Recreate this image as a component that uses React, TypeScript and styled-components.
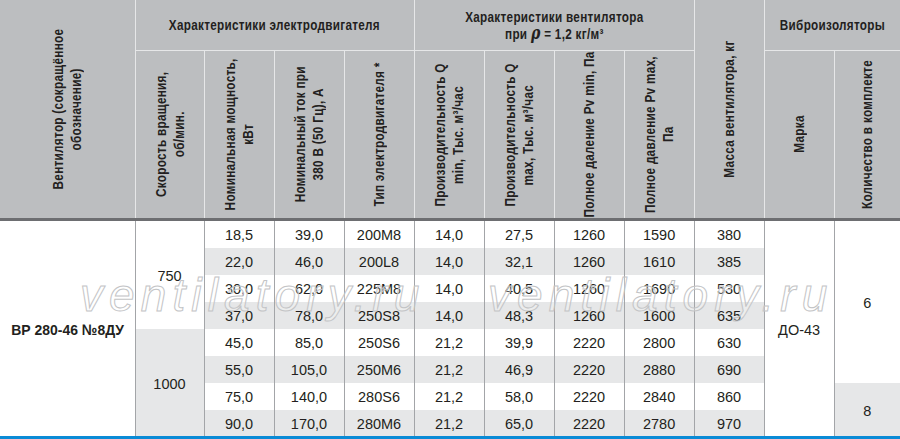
import styled, { createGlobalStyle } from "styled-components";

const GlobalStyle = createGlobalStyle`
  html, body {
    margin: 0;
    padding: 0;
    background: #fff;
  }
`;

const SANS = `"Liberation Sans", Arial, sans-serif`;

const Page = styled.div`
  width: 900px;
  height: 439px;
  display: flex;
  flex-direction: column;
  overflow: hidden;
  background: #fff;
`;

const TableBox = styled.div`
  position: relative;
  flex: 1;
  overflow: hidden;
`;

const BlueBar = styled.div`
  flex: none;
  height: 3px;
  background: #0a8bd6;
`;

const Table = styled.table`
  width: 900px;
  table-layout: fixed;
  border-collapse: collapse;
  border-style: hidden;
  color: #231f20;
  font-family: ${SANS};
`;

const HeadCell = styled.th`
  background: #bcbec0;
  border: 1px solid #e6e7e8;
  border-bottom: 3px solid #6d6e71;
  padding: 0;
  font-weight: 700;
  font-size: 15px;
  line-height: 18px;
  letter-spacing: 0.4px;
  text-align: center;
  vertical-align: middle;
  overflow: hidden;
`;

const GroupCell = styled.th`
  background: #bcbec0;
  border: 1px solid #e6e7e8;
  height: 50px;
  padding: 0;
  font-weight: 700;
  font-size: 15px;
  line-height: 16px;
  letter-spacing: 0.4px;
  text-align: center;
  vertical-align: middle;
`;

// the print uses a condensed face: squeeze along the text direction
const Squeeze = styled.span`
  display: inline-block;
  white-space: nowrap;
  transform: scaleX(0.78);
`;

const SubRow = styled.tr`
  height: 169px;
`;

const VBox = styled.div<{ $h: number }>`
  height: ${(p) => p.$h}px;
  display: flex;
  align-items: center;
  justify-content: center;
`;

const VLabel = styled.span`
  flex: none;
  writing-mode: vertical-rl;
  transform: rotate(180deg) scaleY(0.78);
  white-space: nowrap;
  text-align: center;
`;

const Rho = styled.span`
  font-family: "DejaVu Serif", serif;
  font-style: italic;
  font-size: 18px;
`;

const BodyRow = styled.tr`
  height: 27px;
`;

const BodyCell = styled.td<{ $shade?: boolean }>`
  background: ${(p) => (p.$shade ? "#e6e7e8" : "#fff")};
  border-left: 1px solid #a3a5a8;
  border-right: 1px solid #a3a5a8;
  padding: 2px 0 0;
  font-size: 14.5px;
  line-height: 25px;
  text-align: center;
  vertical-align: middle;
  white-space: nowrap;
`;

const FanName = styled.span`
  display: inline-block;
  font-weight: 700;
  font-size: 15.5px;
  transform: scaleX(0.9);
`;

const Watermark = styled.div<{ $left: number }>`
  position: absolute;
  top: 272px;
  left: ${(p) => p.$left}px;
  font-family: ${SANS};
  font-style: italic;
  font-size: 46px;
  line-height: 46px;
  letter-spacing: 6.1px;
  color: rgba(255, 255, 255, 0.25);
  -webkit-text-stroke: 1px #c3c4c6;
  white-space: nowrap;
  pointer-events: none;
`;

const widths = [135, 69, 70, 70, 70, 70, 70, 70, 70, 70, 70, 66];

const rows = [
  ["18,5", "39,0", "200M8", "14,0", "27,5", "1260", "1590", "380"],
  ["22,0", "46,0", "200L8", "14,0", "32,1", "1260", "1610", "385"],
  ["30,0", "62,0", "225M8", "14,0", "40,5", "1260", "1690", "530"],
  ["37,0", "78,0", "250S8", "14,0", "48,3", "1260", "1600", "635"],
  ["45,0", "85,0", "250S6", "21,2", "39,9", "2220", "2800", "630"],
  ["55,0", "105,0", "250M6", "21,2", "46,9", "2220", "2880", "690"],
  ["75,0", "140,0", "280S6", "21,2", "58,0", "2220", "2840", "860"],
  ["90,0", "170,0", "280M6", "21,2", "65,0", "2220", "2780", "970"],
];

// header labels of the second row, each line on its own
const subHeads: string[][] = [
  ["Скорость вращения,", "об/мин."],
  ["Номинальная мощность,", "кВт"],
  ["Номинальный ток при", "380 В (50 Гц), А"],
  ["Тип электродвигателя *"],
  ["Производительность Q", "min, Тыс. м³/час"],
  ["Производительность Q", "max, Тыс. м³/час"],
  ["Полное даление Pv min, Па"],
  ["Полное давление Pv max,", "Па"],
  ["Марка"],
];

function Lines({ lines, h }: { lines: string[]; h: number }) {
  return (
    <VBox $h={h}>
      <VLabel>
        {lines.map((l, i) => (
          <span key={i}>
            {i > 0 && <br />}
            {l}
          </span>
        ))}
      </VLabel>
    </VBox>
  );
}

export default function App() {
  return (
    <Page>
      <GlobalStyle />
      <TableBox>
        <Table>
          <colgroup>
            {widths.map((w, i) => (
              <col key={i} style={{ width: w }} />
            ))}
          </colgroup>
          <thead>
            <tr>
              <HeadCell rowSpan={2}>
                <Lines h={216} lines={["Вентилятор (сокращённое", "обозначение)"]} />
              </HeadCell>
              <GroupCell colSpan={4}>
                <Squeeze>Характеристики электродвигателя</Squeeze>
              </GroupCell>
              <GroupCell colSpan={4}>
                <Squeeze>
                  Характеристики вентилятора
                  <br />
                  при <Rho>ρ</Rho> = 1,2 кг/м³
                </Squeeze>
              </GroupCell>
              <HeadCell rowSpan={2}>
                <Lines h={216} lines={["Масса вентилятора, кг"]} />
              </HeadCell>
              <GroupCell colSpan={2}>
                <Squeeze>Виброизоляторы</Squeeze>
              </GroupCell>
            </tr>
            <SubRow>
              {subHeads.map((l, i) => (
                <HeadCell key={i}>
                  <Lines h={165} lines={l} />
                </HeadCell>
              ))}
              <HeadCell>
                <Lines h={165} lines={["Количество в комплекте"]} />
              </HeadCell>
            </SubRow>
          </thead>
          <tbody>
            {rows.map((r, i) => {
              const shade = i % 2 === 1;
              return (
                <BodyRow key={i}>
                  {i === 0 && (
                    <BodyCell rowSpan={8}>
                      <FanName>ВР 280-46 №8ДУ</FanName>
                    </BodyCell>
                  )}
                  {i === 0 && <BodyCell rowSpan={4}>750</BodyCell>}
                  {i === 4 && (
                    <BodyCell rowSpan={4} $shade>
                      1000
                    </BodyCell>
                  )}
                  {r.map((v, j) => (
                    <BodyCell key={j} $shade={shade}>
                      {v}
                    </BodyCell>
                  ))}
                  {i === 0 && <BodyCell rowSpan={8}>ДО-43</BodyCell>}
                  {i === 0 && <BodyCell rowSpan={6}>6</BodyCell>}
                  {i === 6 && (
                    <BodyCell rowSpan={2} $shade>
                      8
                    </BodyCell>
                  )}
                </BodyRow>
              );
            })}
          </tbody>
        </Table>
        <Watermark $left={80}>ventilatory.ru</Watermark>
        <Watermark $left={488}>ventilatory.ru</Watermark>
      </TableBox>
      <BlueBar />
    </Page>
  );
}
